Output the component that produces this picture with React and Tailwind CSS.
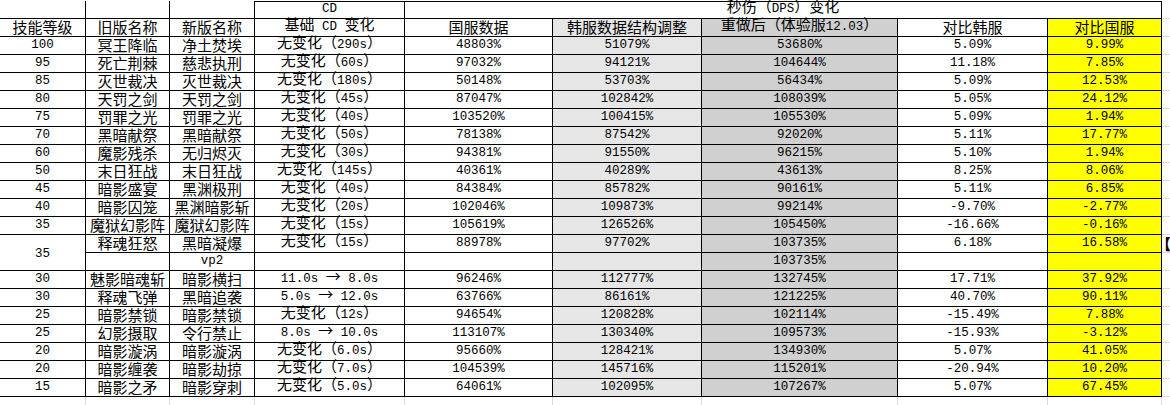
import React from "react";

const rows = [
  ["100", "冥王降临", "净土焚埃", "无变化（290s）", "48803%", "51079%", "53680%", "5.09%", "9.99%"],
  ["95", "死亡荆棘", "慈悲执刑", "无变化（60s）", "97032%", "94121%", "104644%", "11.18%", "7.85%"],
  ["85", "灭世裁决", "灭世裁决", "无变化（180s）", "50148%", "53703%", "56434%", "5.09%", "12.53%"],
  ["80", "天罚之剑", "天罚之剑", "无变化（45s）", "87047%", "102842%", "108039%", "5.05%", "24.12%"],
  ["75", "罚罪之光", "罚罪之光", "无变化（40s）", "103520%", "100415%", "105530%", "5.09%", "1.94%"],
  ["70", "黑暗献祭", "黑暗献祭", "无变化（50s）", "78138%", "87542%", "92020%", "5.11%", "17.77%"],
  ["60", "魔影残杀", "无归烬灭", "无变化（30s）", "94381%", "91550%", "96215%", "5.10%", "1.94%"],
  ["50", "末日狂战", "末日狂战", "无变化（145s）", "40361%", "40289%", "43613%", "8.25%", "8.06%"],
  ["45", "暗影盛宴", "黑渊极刑", "无变化（40s）", "84384%", "85782%", "90161%", "5.11%", "6.85%"],
  ["40", "暗影囚笼", "黑渊暗影斩", "无变化（20s）", "102046%", "109873%", "99214%", "-9.70%", "-2.77%"],
  ["35", "魔狱幻影阵", "魔狱幻影阵", "无变化（15s）", "105619%", "126526%", "105450%", "-16.66%", "-0.16%"],
  ["35", "释魂狂怒", "黑暗凝爆", "无变化（15s）", "88978%", "97702%", "103735%", "6.18%", "16.58%", "span"],
  [null, "", "vp2", "", "", "", "103735%", "", ""],
  ["30", "魅影暗魂斩", "暗影横扫", "11.0s → 8.0s", "96246%", "112777%", "132745%", "17.71%", "37.92%"],
  ["30", "释魂飞弹", "黑暗追袭", "5.0s → 12.0s", "63766%", "86161%", "121225%", "40.70%", "90.11%"],
  ["25", "暗影禁锁", "暗影禁锁", "无变化（12s）", "94654%", "120828%", "102114%", "-15.49%", "7.88%"],
  ["25", "幻影摄取", "令行禁止", "8.0s → 10.0s", "113107%", "130340%", "109573%", "-15.93%", "-3.12%"],
  ["20", "暗影漩涡", "暗影漩涡", "无变化（6.0s）", "95660%", "128421%", "134930%", "5.07%", "41.05%"],
  ["20", "暗影缠袭", "暗影劫掠", "无变化（7.0s）", "104539%", "145716%", "115201%", "-20.94%", "10.20%"],
  ["15", "暗影之矛", "暗影穿刺", "无变化（5.0s）", "64061%", "102095%", "107267%", "5.07%", "67.45%"],
];

const bgFor = ["", "", "", "", "", "bg-[#e6e6e6]", "bg-[#d0d0d0]", "", "bg-[#ffff00]"];

function T({ s }) {
  const parts = s.split(/([\x00-\x7F]+)/).filter((p) => p !== "");
  return (
    <span className="whitespace-pre">
      {parts.map((p, i) =>
        /^[\x00-\x7F]+$/.test(p) ? (
          <span key={i} className="font-['Liberation_Mono',monospace] text-[12.5px]">
            {p}
          </span>
        ) : (
          <span key={i}>{p}</span>
        )
      )}
    </span>
  );
}

function Cell({ s = "", className = "" }) {
  return (
    <div
      className={
        "flex items-end justify-center border-r border-b border-black leading-[16px] pb-[1px] " +
        className
      }
    >
      <T s={s} />
    </div>
  );
}

function Extra({ children }) {
  return <div className="border-b border-[#dadada] overflow-hidden">{children}</div>;
}

export default function App() {
  const header = ["技能等级", "旧版名称", "新版名称", "基础 CD 变化", "国服数据", "韩服数据结构调整", "重做后（体验服12.03）", "对比韩服", "对比国服"];
  return (
    <div className="w-[1170px] h-[405px] overflow-hidden bg-white pt-px text-black text-[15px] font-['Noto_Sans_CJK_SC',sans-serif]">
      <div className="grid grid-cols-[86px_84px_85px_150px_148px_149px_196px_150px_114px_8px] auto-rows-[18px]">
        {/* header row 1 */}
        <Cell />
        <Cell />
        <Cell />
        <Cell s="CD" className="border-t" />
        <Cell s="秒伤（DPS）变化" className="border-t col-span-5" />
        <Extra />
        {/* header row 2 */}
        {header.map((h, i) => (
          <Cell key={i} s={h} className={bgFor[i]} />
        ))}
        <Extra />
        {rows.map((r, ri) => {
          const cells = [];
          r.slice(0, 9).forEach((v, ci) => {
            if (v === null) return;
            const extra = ci === 0 && r[9] === "span" ? "row-span-2 !items-center !pb-0" : "";
            cells.push(<Cell key={ri + "-" + ci} s={v} className={bgFor[ci] + " " + extra} />);
          });
          cells.push(
            <Extra key={ri + "-x"}>
              {r[9] === "span" ? (
                <div className="ml-[-6px] leading-[17px] font-bold">【</div>
              ) : null}
            </Extra>
          );
          return cells;
        })}
        {/* partial empty row below */}
        {Array.from({ length: 9 }).map((_, i) => (
          <div key={"f" + i} className="border-r border-[#dadada]" />
        ))}
        <div />
      </div>
    </div>
  );
}
